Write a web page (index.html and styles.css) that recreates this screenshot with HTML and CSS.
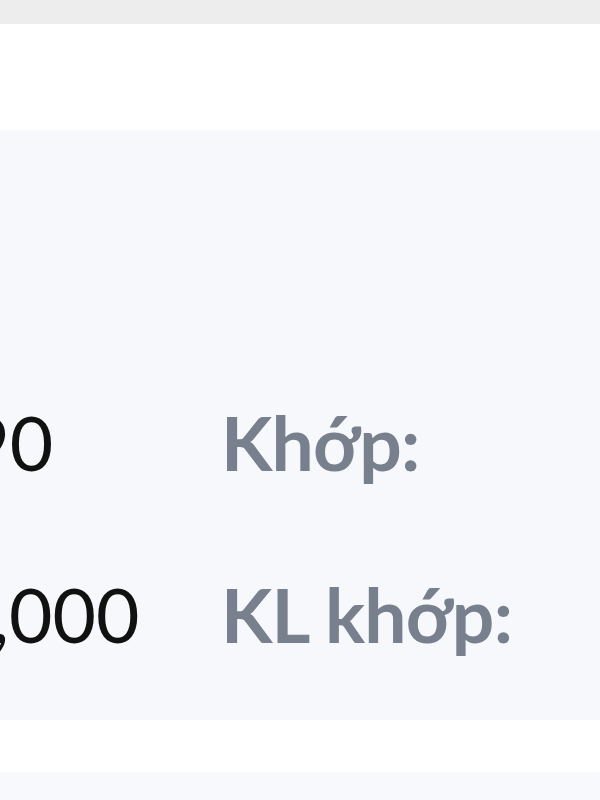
FILE: index.html
```html
<!DOCTYPE html>
<html lang="vi">
<head>
    <meta charset="UTF-8">
    <meta name="viewport" content="width=device-width, initial-scale=1.0">
    <title>Lệnh khớp</title>
    <link rel="stylesheet" href="styles.css">
</head>
<body>
    <div class="topbar"></div>
    <div class="spacer"></div>

    <!-- Order match detail -->
    <div class="panel">
        <div class="rows">
            <div class="row">
                <span class="value">2.90</span>
                <span class="label">Khớp:</span>
            </div>
            <div class="row">
                <span class="value">10,000</span>
                <span class="label">KL khớp:</span>
            </div>
        </div>
    </div>

    <div class="gap"></div>
    <div class="panel-next"></div>
</body>
</html>
```

FILE: styles.css
```css
body {
    margin: 0;
    font-family: Lato, "Noto Sans", sans-serif;
    background-color: #fff;
    overflow: hidden;
}

.topbar {
    height: 24px;
    background-color: #ededed;
}

.spacer {
    height: 106px;
}

.panel {
    height: 590px;
    background-color: #f7f8fc;
    box-sizing: border-box;
    padding-top: 267px;
    overflow: hidden;
}

.rows {
    margin-left: -95px;
    display: flex;
    flex-direction: column;
    gap: 82px;
}

.row {
    display: grid;
    grid-template-columns: 316px auto;
    font-size: 75px;
    line-height: 90px;
    white-space: nowrap;
}

.value {
    color: #111;
    font-weight: 400;
}

.label {
    color: #78808e;
    font-weight: 700;
    letter-spacing: -0.8px;
}

.gap {
    height: 52px;
}

.panel-next {
    height: 28px;
    background-color: #f8f9fc;
}
```
